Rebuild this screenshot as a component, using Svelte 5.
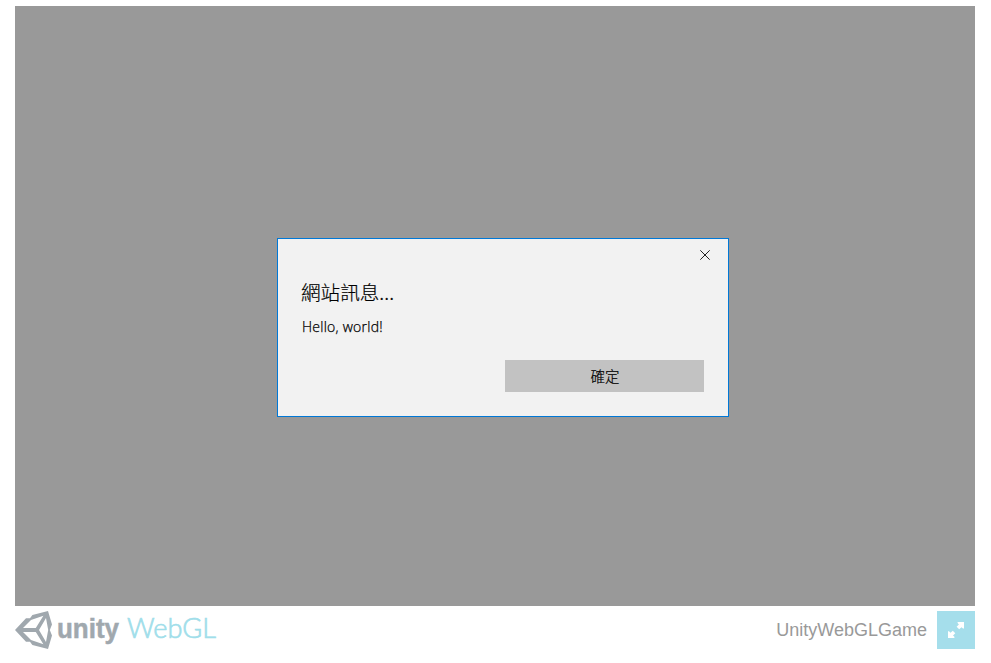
<script>
  const title = 'UnityWebGLGame';
  const heading = '網站訊息...';
  const message = 'Hello, world!';
  const confirmLabel = '確定';
</script>

<main class="page">
  <section class="canvas">
    <div class="dialog" role="dialog" aria-label={heading}>
      <button class="close" aria-label="Close">
        <svg width="10" height="10" viewBox="0 0 10 10"><path d="M0.3 0.3L9.7 9.7M9.7 0.3L0.3 9.7" stroke="#222" stroke-width="1" fill="none" /></svg>
      </button>
      <h1>{heading}</h1>
      <p>{message}</p>
      <button class="ok">{confirmLabel}</button>
    </div>
  </section>
  <footer>
    <svg class="logo" width="210" height="38" viewBox="0 0 210 38">
      <path
        fill="#a0a8ae"
        fill-rule="evenodd"
        d="M0 19L11 7.2H15L17.4 4L33 0L37 13.5L34.8 19L37 24.5L33 38L17.4 34L15 30.8H11ZM8 17H20.8L28.4 4.8L16 9ZM8 21H20.8L28.4 33.2L16 29ZM24 19L31 7L33.2 19L31 31Z"
      />
      <text class="unity" x="42" y="27" textLength="62" lengthAdjust="spacingAndGlyphs">unity</text>
      <text class="webgl" x="112" y="27" textLength="89" lengthAdjust="spacingAndGlyphs">WebGL</text>
    </svg>
    <div class="right">
      <span class="title">{title}</span>
      <button class="fullscreen" aria-label="Fullscreen">
        <svg width="38" height="38" viewBox="0 0 38 38" fill="#fff">
          <path d="M20.6 11h6.4v6.4h-1l-1.5-1.2-2.3 2-2.6-2.5 2.3-2.3-1.3-1.4z" />
          <path d="M11 20.2h1l1.5 1.6 2.3-2 2.5 2.4-2.3 2.4 1.4 1.2v1.2h-6.4z" />
        </svg>
      </button>
    </div>
  </footer>
</main>

<style>
  :global(body) {
    margin: 0;
    background: #fff;
  }
  .page {
    width: 960px;
    padding: 6px 0 0 15px;
    font-family: "Liberation Sans", Arial, sans-serif;
  }
  .canvas {
    box-sizing: border-box;
    height: 600px;
    padding: 232px 0 0 262px;
    background: #999;
  }
  .dialog {
    box-sizing: border-box;
    display: flex;
    flex-direction: column;
    width: 452px;
    height: 179px;
    padding: 0 24px 24px;
    border: 1px solid #0078d7;
    background: #f2f2f2;
    color: #000;
    font-family: "Open Sans", "Noto Sans CJK TC", sans-serif;
  }
  button {
    padding: 0;
    border: 0;
    background: none;
  }
  svg {
    display: block;
  }
  .close {
    align-self: flex-end;
    display: grid;
    place-items: center;
    width: 46px;
    height: 32px;
    margin-right: -24px;
  }
  h1 {
    margin: 7px 0 0 -1px;
    font-size: 19.6px;
    font-weight: 300;
    line-height: 28px;
    font-family: "Noto Sans CJK TC", sans-serif;
    -webkit-text-stroke: 0.2px #000;
  }
  p {
    margin: 11px 0 0;
    font-size: 14px;
    font-weight: 300;
    line-height: 20px;
    letter-spacing: 0.25px;
    -webkit-text-stroke: 0.25px #000;
  }
  .ok {
    align-self: flex-end;
    width: 199px;
    height: 32px;
    margin-top: auto;
    padding-left: 1px;
    background: #c2c2c2;
    color: #000;
    font: 300 14.5px/32px "Noto Sans CJK TC", sans-serif;
    -webkit-text-stroke: 0.2px #000;
  }
  footer {
    display: flex;
    justify-content: space-between;
    height: 38px;
    margin-top: 5px;
  }
  .unity {
    fill: #a0a8ae;
    stroke: #a0a8ae;
    stroke-width: 0.5px;
    font: bold 27px "Liberation Sans", sans-serif;
  }
  .webgl {
    fill: #a0deea;
    stroke: #a0deea;
    stroke-width: 0.7px;
    font: 300 27.5px Lato, sans-serif;
  }
  .right {
    display: flex;
    gap: 10px;
  }
  .title {
    color: #999;
    font-size: 18px;
    line-height: 38px;
  }
  .fullscreen {
    width: 38px;
    height: 38px;
    background: #a5deeb;
  }
</style>
